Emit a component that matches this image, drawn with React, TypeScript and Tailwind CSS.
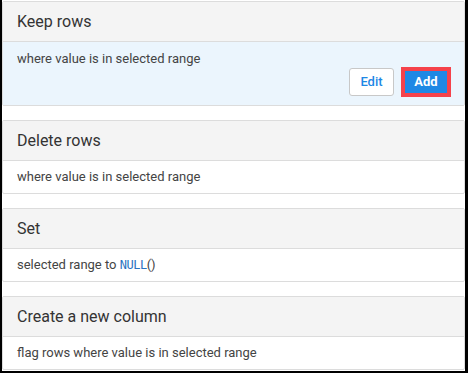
const sections = [
  { title: "Create a new column", body: <>flag rows where value is in selected range</> },
];

function Section({ title, children, active }: { title: string; children: React.ReactNode; active?: boolean }) {
  return (
    <div className="border border-[#dcdcdc] rounded-[2px] overflow-hidden">
      <div className="h-[40px] bg-[#f4f4f4] border-b border-[#dcdcdc] pl-[14px] flex items-center text-[16px] text-[#333]">
        {title}
      </div>
      <div className={active ? "bg-[#ebf5fd] pl-[14px] pr-[13px] pt-[9px] pb-[8px] text-[13px] text-[#444]" : "h-[32px] pl-[14px] flex items-center text-[13px] text-[#444]"}>
        {children}
      </div>
    </div>
  );
}

export default function App() {
  return (
    <div className="w-[468px] h-[373px] bg-white border-l-2 border-r-[3px] border-b-2 border-black pt-[1px] flex flex-col gap-[14px] font-['Roboto',sans-serif]">
      <Section title="Keep rows" active>
        <div className="leading-[16px]">where value is in selected range</div>
        <div className="flex justify-end items-center gap-[7px]">
          <button className="h-[28px] w-[45px] bg-white border border-[#c8c8c8] rounded-[3px] text-[13px] font-medium text-[#1e88e5]">
            Edit
          </button>
          <div className="border-[4px] border-[#f5424b]">
            <button className="h-[22px] w-[42px] bg-[#1e88e5] text-[13px] font-bold text-white">Add</button>
          </div>
        </div>
      </Section>
      <Section title="Delete rows">where value is in selected range</Section>
      <Section title="Set">
        selected range to&nbsp;<span className="font-['DejaVu_Sans_Mono',monospace] text-[12px] tracking-[-0.5px] text-[#2a72c0]">NULL</span>()
      </Section>
      {sections.map((s) => (
        <Section key={s.title} title={s.title}>
          {s.body}
        </Section>
      ))}
    </div>
  );
}
